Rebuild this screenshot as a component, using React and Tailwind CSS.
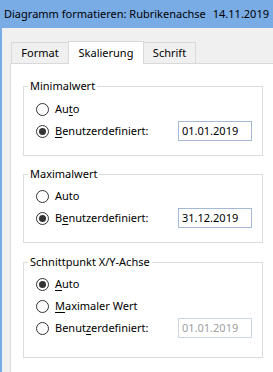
import React from "react";

const font = { fontFamily: '"Noto Sans", "Open Sans", sans-serif' };

function U({ children }) {
  return <span className="underline underline-offset-[2px] decoration-[1px]">{children}</span>;
}

function Radio({ checked }) {
  return (
    <span className="w-[13px] h-[13px] rounded-full border border-[#333333] bg-white flex items-center justify-center shrink-0">
      {checked && <span className="w-[7px] h-[7px] rounded-full bg-[#333333]" />}
    </span>
  );
}

function Row({ checked, label, value, disabled }) {
  return (
    <div className="h-[22px] flex items-center justify-between pl-[12px] pr-[10px]">
      <div className="flex items-center gap-[6px]">
        <Radio checked={checked} />
        <span className="text-[11px] leading-[16px] text-black whitespace-nowrap">{label}</span>
      </div>
      {value && (
        <div
          className={
            "w-[74px] h-[20px] border bg-white flex items-center pl-[3px] text-[11px] leading-[16px] " +
            (disabled ? "border-[#ccd6e3] text-[#a0a0a0]" : "border-[#a5bad6] text-black")
          }
        >
          {value}
        </div>
      )}
    </div>
  );
}

function Group({ title, className, children }) {
  return (
    <fieldset className={"w-[240px] border border-[#dcdcdc] " + className}>
      <legend className="ml-[4px] px-[2px] text-[11px] leading-[16px] text-black whitespace-nowrap">{title}</legend>
      {children}
    </fieldset>
  );
}

export default function App() {
  return (
    <div className="w-[273px] h-[372px] overflow-hidden bg-[#f0f0f0] flex flex-col" style={font}>
      <div className="h-[28px] bg-[#79abe5] flex items-center justify-between pl-[4px] pr-[4px] text-[11px] text-black shrink-0 whitespace-nowrap">
        <span>Diagramm formatieren: Rubrikenachse</span>
        <span>14.11.2019</span>
      </div>
      <div className="flex-1 border-l-2 border-[#79abe5] pl-[8px] pt-[13px] flex flex-col">
        <div className="flex items-end pl-[1px] text-[11px] leading-[16px] text-black">
          <div className="w-[57px] h-[21px] border-l border-t border-[#d9d9d9] flex items-center justify-center">
            Format
          </div>
          <div className="w-[76px] h-[23px] border border-b-0 border-[#d9d9d9] bg-white relative z-10 -mb-px flex items-center justify-center pb-[1px]">
            Skalierung
          </div>
          <div className="w-[52px] h-[21px] border-t border-r border-[#d9d9d9] flex items-center justify-center">
            Schrift
          </div>
        </div>
        <div className="w-[280px] h-[320px] shrink-0 border border-[#d9d9d9] bg-white pl-[12px] flex flex-col">
          <Group title="Minimalwert" className="mt-[14px] pt-[4px] pb-[13px]">
            <Row label={<>Au<U>t</U>o</>} />
            <Row checked label={<><U>B</U>enutzerdefiniert:</>} value="01.01.2019" />
          </Group>
          <Group title="Maximalwert" className="mt-[10px] pt-[3px] pb-[13px]">
            <Row label="Auto" />
            <Row checked label={<>B<U>e</U>nutzerdefiniert:</>} value="31.12.2019" />
          </Group>
          <Group title="Schnittpunkt X/Y-Achse" className="mt-[11px] pt-[3px] pb-[18px]">
            <Row checked label={<><U>A</U>uto</>} />
            <Row label={<><U>M</U>aximaler Wert</>} />
            <Row label={<>Benut<U>z</U>erdefiniert:</>} value="01.01.2019" disabled />
          </Group>
        </div>
      </div>
    </div>
  );
}
